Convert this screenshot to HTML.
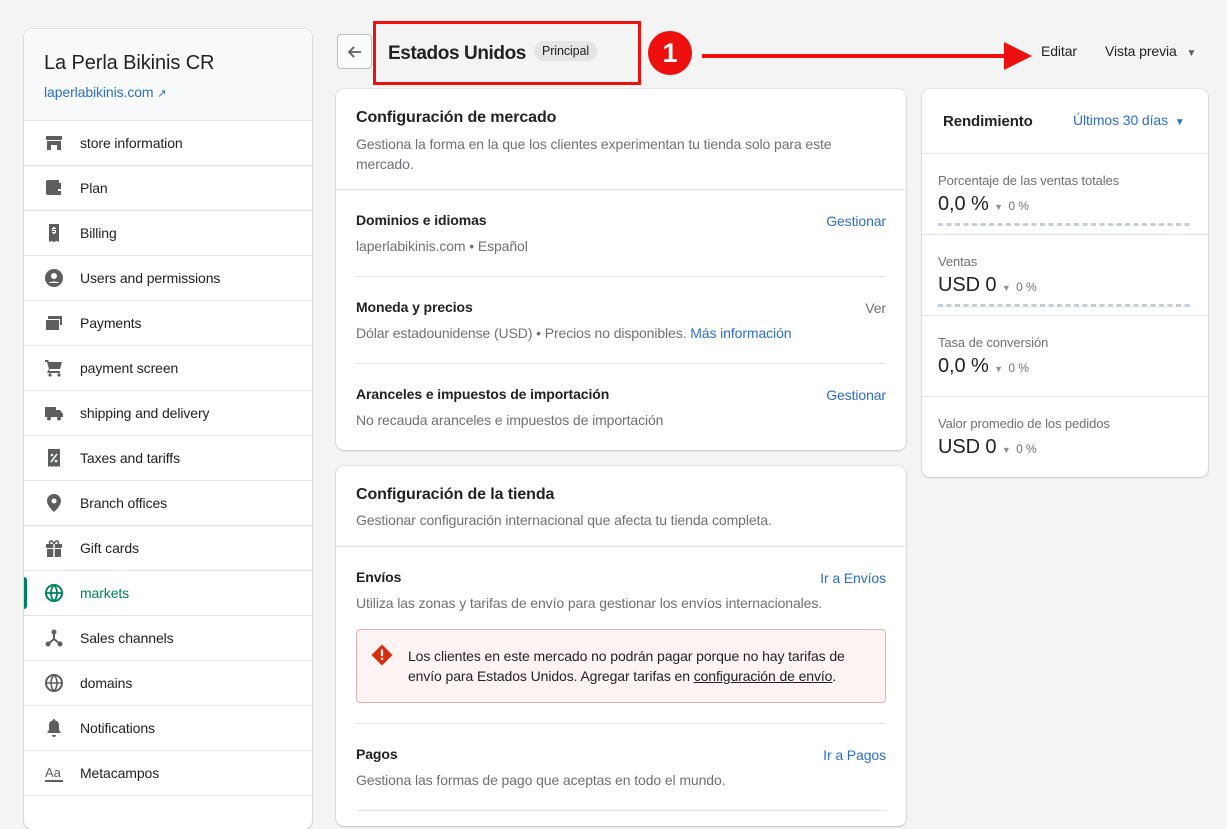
<!DOCTYPE html>
<html><head><meta charset="utf-8"><style>
*{box-sizing:border-box;margin:0;padding:0}
body{width:1227px;height:813px;overflow:hidden;background:#f4f4f4;font-family:"Liberation Sans",sans-serif;color:#202223;position:relative;font-size:14px;letter-spacing:-.1px}
.a{position:absolute}
.card{position:absolute;background:#fff;border-radius:8px;box-shadow:0 0 0 1px rgba(0,0,0,.05),0 1px 2px rgba(0,0,0,.15)}
.side{left:24px;top:29px;width:288px;height:800px;overflow:hidden}
.side .hd{height:92px;background:#f9fafb;border-bottom:1px solid #e1e3e5;padding:23px 20px}
.item{height:45px;border-bottom:1px solid #e1e3e5;display:flex;align-items:center;padding-left:20px;font-size:14px;color:#202223;position:relative}
.item svg{width:20px;height:20px;margin-right:16px;fill:#5c5f62}
.item.act{color:#008060}
.item.act:before{content:"";position:absolute;left:0;top:6px;bottom:6px;width:3px;background:#008060;border-radius:0 3px 3px 0}
.item.act svg{fill:#008060}
.link{color:#2c6ecb}
.sub{color:#6d7175;font-size:14px}
.hr{position:absolute;height:1px;background:#e1e3e5}
.t{position:absolute;white-space:nowrap}
.r{position:absolute;white-space:nowrap;right:341px;color:#2c6ecb}
</style></head><body>

<div class="card side">
 <div class="hd"><div style="font-size:20px;color:#202223">La Perla Bikinis CR</div>
 <div class="link" style="margin-top:9px;font-size:14px">laperlabikinis.com <span style="font-size:11px">&#x2197;</span></div></div>
 <div class="item"><svg viewBox="0 0 20 20"><path d="M2 3h16v4H2zM3 8h14v9h-4v-5H7v5H3z"/></svg>store information</div>
 <div class="item"><svg viewBox="0 0 20 20"><path d="M2 4a2 2 0 012-2h11v3h2v12H4a2 2 0 01-2-2zm12 7v2h3v-2z"/></svg>Plan</div>
 <div class="item"><svg viewBox="0 0 20 20"><path d="M5 1h10v18l-2-1-3 1-3-1-2 1zM9 4v1H8v3h3v1H8v1h1v1h2v-1h1V7H9V6h3V5h-1V4z"/></svg>Billing</div>
 <div class="item"><svg viewBox="0 0 20 20"><circle cx="10" cy="10" r="9"/><circle cx="10" cy="8" r="3" fill="#fff"/><path d="M4.5 15a7 4 0 0111 0" fill="#fff"/></svg>Users and permissions</div>
 <div class="item"><svg viewBox="0 0 20 20"><path d="M4 3h14v9h-2V6H4zM2 7h13v10H2z"/></svg>Payments</div>
 <div class="item"><svg viewBox="0 0 20 20"><path d="M1 2h3l1 2h13l-2 7H6l-1 2h11v2H3l2-4L3 4H1z"/><circle cx="6" cy="17" r="1.6"/><circle cx="15" cy="17" r="1.6"/></svg>payment screen</div>
 <div class="item"><svg viewBox="0 0 20 20"><path d="M1 4h11v10H1zM12 7h4l3 4v3h-7z"/><circle cx="5" cy="15.5" r="2"/><circle cx="15" cy="15.5" r="2"/></svg>shipping and delivery</div>
 <div class="item"><svg viewBox="0 0 20 20"><path d="M4 1h12v18l-2-1-2 1-2-1-2 1-2-1-2 1z"/><circle cx="8" cy="7" r="1.3" fill="#fff"/><circle cx="12" cy="13" r="1.3" fill="#fff"/><path d="M7 14l6-8" stroke="#fff" stroke-width="1.5"/></svg>Taxes and tariffs</div>
 <div class="item"><svg viewBox="0 0 20 20"><path d="M10 1a7 7 0 00-7 7c0 5 7 11 7 11s7-6 7-11a7 7 0 00-7-7z"/><circle cx="10" cy="8" r="2.5" fill="#fff"/></svg>Branch offices</div>
 <div class="item"><svg viewBox="0 0 20 20"><path d="M2 6h16v4H2zM3 11h14v8H3z"/><path d="M10 6v13" stroke="#fff" stroke-width="1.5"/><path d="M10 6C8 1 4 3 6 6M10 6c2-5 6-3 4 0" stroke="#5c5f62" stroke-width="1.6" fill="none"/></svg>Gift cards</div>
 <div class="item act"><svg viewBox="0 0 20 20"><circle cx="10" cy="10" r="8" fill="none" stroke="#008060" stroke-width="2"/><path d="M2 10h16M10 2c-4 4-4 12 0 16M10 2c4 4 4 12 0 16" stroke="#008060" stroke-width="1.8" fill="none"/></svg>markets</div>
 <div class="item"><svg viewBox="0 0 20 20"><circle cx="10" cy="4" r="2.5"/><circle cx="4" cy="16" r="2.5"/><circle cx="16" cy="16" r="2.5"/><path d="M10 4v7l-6 5M10 11l6 5" stroke="#5c5f62" stroke-width="2" fill="none"/></svg>Sales channels</div>
 <div class="item"><svg viewBox="0 0 20 20"><circle cx="10" cy="10" r="8" fill="none" stroke="#5c5f62" stroke-width="2"/><path d="M2 10h16M10 2c-4 4-4 12 0 16M10 2c4 4 4 12 0 16" stroke="#5c5f62" stroke-width="1.6" fill="none"/></svg>domains</div>
 <div class="item"><svg viewBox="0 0 20 20"><path d="M10 1a1 1 0 011 1.2A5 5 0 0115 7v5l2 3H3l2-3V7a5 5 0 014-4.8A1 1 0 0110 1zM8 17h4a2 2 0 01-4 0z"/></svg>Notifications</div>
 <div class="item"><svg viewBox="0 0 20 20"><text x="1" y="14" font-size="13" font-family="Liberation Sans" fill="#5c5f62">Aa</text><path d="M1 17h18v2H1z"/></svg>Metacampos</div>
 <div class="item"></div>
</div>

<!-- header -->
<div class="a" style="left:337px;top:34px;width:35px;height:35px;border:1px solid #babfc3;border-radius:4px;background:#fafbfb"><svg viewBox="0 0 20 20" width="20" height="20" style="margin:7px"><path d="M16 10H4M9 5l-5 5 5 5" stroke="#5c5f62" stroke-width="1.8" fill="none"/></svg></div>
<div class="a" style="left:373px;top:21px;width:268px;height:64px;border:3px solid #ee0f0f"></div>
<div class="t" style="left:388px;top:43px;font-size:19px;font-weight:bold;color:#202223;letter-spacing:-.4px">Estados Unidos</div>
<div class="t" style="left:534px;top:41px;height:20px;padding:0 8px;background:#e4e5e7;border-radius:10px;font-size:12.5px;line-height:20px;color:#202223">Principal</div>
<div class="a" style="left:648px;top:31px;width:44px;height:44px;border-radius:50%;background:#ee0f0f;color:#fff;font-size:27px;font-weight:bold;text-align:center;line-height:44px">1</div>
<div class="a" style="left:702px;top:54px;width:305px;height:4px;background:#ee0f0f"></div>
<div class="a" style="left:1004px;top:42px;width:0;height:0;border-left:28px solid #ee0f0f;border-top:14px solid transparent;border-bottom:14px solid transparent"></div>
<div class="t" style="left:1041px;top:43px;font-size:14px">Editar</div>
<div class="t" style="left:1105px;top:43px;font-size:14px">Vista previa <span style="font-size:10px;color:#5c5f62;margin-left:6px">&#9660;</span></div>

<!-- card 1 -->
<div class="card" style="left:336px;top:89px;width:570px;height:361px"></div>
<div class="t" style="left:356px;top:109px;font-size:16px;font-weight:bold">Configuración de mercado</div>
<div class="a sub" style="left:356px;top:134px;width:500px;line-height:20px">Gestiona la forma en la que los clientes experimentan tu tienda solo para este mercado.</div>
<div class="hr" style="left:336px;top:189px;width:570px"></div>
<div class="t" style="left:356px;top:212px;font-weight:bold;font-size:14px">Dominios e idiomas</div>
<div class="r" style="top:213px">Gestionar</div>
<div class="t sub" style="left:356px;top:238px">laperlabikinis.com • Español</div>
<div class="hr" style="left:356px;top:276px;width:530px"></div>
<div class="t" style="left:356px;top:299px;font-weight:bold">Moneda y precios</div>
<div class="r" style="top:300px;color:#6d7175">Ver</div>
<div class="t sub" style="left:356px;top:325px">Dólar estadounidense (USD) • Precios no disponibles. <span class="link">Más información</span></div>
<div class="hr" style="left:356px;top:363px;width:530px"></div>
<div class="t" style="left:356px;top:386px;font-weight:bold">Aranceles e impuestos de importación</div>
<div class="r" style="top:387px">Gestionar</div>
<div class="t sub" style="left:356px;top:412px">No recauda aranceles e impuestos de importación</div>

<!-- card 2 -->
<div class="card" style="left:336px;top:466px;width:570px;height:360px"></div>
<div class="t" style="left:356px;top:486px;font-size:16px;font-weight:bold">Configuración de la tienda</div>
<div class="t sub" style="left:356px;top:512px">Gestionar configuración internacional que afecta tu tienda completa.</div>
<div class="hr" style="left:336px;top:546px;width:570px"></div>
<div class="t" style="left:356px;top:569px;font-weight:bold">Envíos</div>
<div class="r" style="top:570px">Ir a Envíos</div>
<div class="t sub" style="left:356px;top:595px">Utiliza las zonas y tarifas de envío para gestionar los envíos internacionales.</div>
<div class="a" style="left:356px;top:629px;width:530px;height:74px;background:#fff4f4;border:1px solid #e0b3b2;border-radius:4px"></div>
<svg class="a" style="left:371px;top:644px" width="22" height="22" viewBox="0 0 20 20"><path d="M10 0.5L19.5 10 10 19.5 0.5 10z" fill="#d82c0d"/><rect x="9" y="5" width="2" height="6" fill="#fff"/><rect x="9" y="12.5" width="2" height="2" fill="#fff"/></svg>
<div class="a" style="left:408px;top:646px;width:460px;line-height:20px;color:#202223">Los clientes en este mercado no podrán pagar porque no hay tarifas de envío para Estados Unidos. Agregar tarifas en <u>configuración de envío</u>.</div>
<div class="hr" style="left:356px;top:723px;width:530px"></div>
<div class="t" style="left:356px;top:746px;font-weight:bold">Pagos</div>
<div class="r" style="top:747px">Ir a Pagos</div>
<div class="t sub" style="left:356px;top:772px">Gestiona las formas de pago que aceptas en todo el mundo.</div>
<div class="hr" style="left:356px;top:810px;width:530px"></div>

<!-- right card -->
<div class="card" style="left:922px;top:89px;width:286px;height:388px"></div>
<div class="t" style="left:943px;top:113px;font-size:15px;font-weight:bold">Rendimiento</div>
<div class="t link" style="left:1073px;top:112px">Últimos 30 días <span style="font-size:10px;margin-left:3px">&#9660;</span></div>
<div class="hr" style="left:922px;top:153px;width:286px"></div>
<div class="t sub" style="left:938px;top:173px;font-size:13px">Porcentaje de las ventas totales</div>
<div class="t" style="left:938px;top:193px;font-size:20px">0,0 % <span style="font-size:9px;color:#8c9196">&#9660;</span> <span style="font-size:12px;color:#6d7175">0 %</span></div>
<div class="a" style="left:938px;top:223px;width:254px;height:3px;background:repeating-linear-gradient(90deg,#c4cdd8 0 5px,transparent 5px 8.5px)"></div>
<div class="hr" style="left:922px;top:234px;width:286px"></div>
<div class="t sub" style="left:938px;top:254px;font-size:13px">Ventas</div>
<div class="t" style="left:938px;top:274px;font-size:20px">USD 0 <span style="font-size:9px;color:#8c9196">&#9660;</span> <span style="font-size:12px;color:#6d7175">0 %</span></div>
<div class="a" style="left:938px;top:304px;width:254px;height:3px;background:repeating-linear-gradient(90deg,#c4cdd8 0 5px,transparent 5px 8.5px)"></div>
<div class="hr" style="left:922px;top:315px;width:286px"></div>
<div class="t sub" style="left:938px;top:335px;font-size:13px">Tasa de conversión</div>
<div class="t" style="left:938px;top:355px;font-size:20px">0,0 % <span style="font-size:9px;color:#8c9196">&#9660;</span> <span style="font-size:12px;color:#6d7175">0 %</span></div>
<div class="hr" style="left:922px;top:396px;width:286px"></div>
<div class="t sub" style="left:938px;top:416px;font-size:13px">Valor promedio de los pedidos</div>
<div class="t" style="left:938px;top:436px;font-size:20px">USD 0 <span style="font-size:9px;color:#8c9196">&#9660;</span> <span style="font-size:12px;color:#6d7175">0 %</span></div>
</body></html>
